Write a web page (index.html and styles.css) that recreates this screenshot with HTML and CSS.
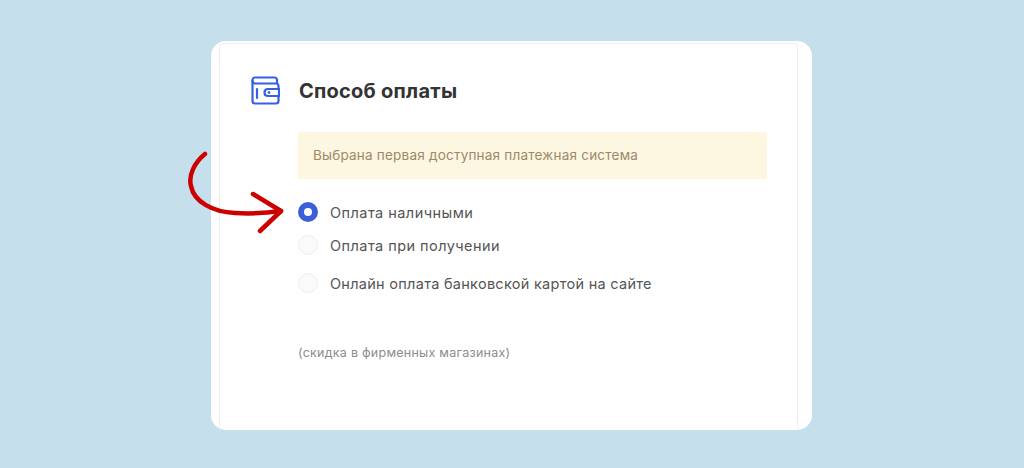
FILE: index.html
```html
<!DOCTYPE html>
<html>
<head lang="en">
    <meta charset="UTF-8">
    <title>Способ оплаты</title>
    <link rel="stylesheet" href="styles.css">
</head>
<body>
<div class="card">
    <svg class="arrow" width="110" height="100" viewBox="0 0 110 100" fill="none">
        <path d="M30 17C20 25 13 38 16 49C19 65 38 75 60 76C76 77 92 76 106 74" stroke="#cc0000" stroke-width="4.500" stroke-linecap="round"/>
        <path d="M78 57L106 74L85 94" stroke="#cc0000" stroke-width="4.500" stroke-linecap="round" stroke-linejoin="round"/>
    </svg>
    <div class="inner">
        <div class="head">
            <svg class="wallet" width="29" height="29" viewBox="0 0 29 29" fill="none" stroke="#3560e0" stroke-width="2.200">
                <path d="M26 8V4C26 2.500 25 1.500 23.500 1.500H4C2.500 1.500 1.500 2.500 1.500 4V25C1.500 26.500 2.500 27.500 4 27.500H25C26.500 27.500 27.500 26.500 27.500 25V20"/>
                <path d="M1.500 4.500C1.500 6.500 2.500 7.500 4 7.500H25C26.500 7.500 27.500 8.500 27.500 10V13"/>
                <path d="M6 13V22" stroke-linecap="round"/>
                <path d="M28 13H17C15 13 13.500 14.500 13.500 16.500C13.500 18.500 15 20 17 20H28V13Z"/>
                <circle cx="18" cy="16.500" r="1" fill="#3560e0" stroke-width="1"/>
            </svg>
            <h2 class="title">Способ оплаты</h2>
        </div>
        <div class="body">
            <div class="alert">Выбрана первая доступная платежная система</div>
            <div class="row row-first"><span class="radio radio-on"></span>Оплата наличными</div>
            <div class="row row-second"><span class="radio"></span>Оплата при получении</div>
            <div class="row row-last"><span class="radio"></span>Онлайн оплата банковской картой на сайте</div>
            <p class="note">(скидка в фирменных магазинах)</p>
        </div>
    </div>
</div>
</body>
</html>
```
FILE: styles.css
```css
* {
    margin: 0;
    padding: 0;
    box-sizing: border-box;
}
body {
    background-color: #c5dfed;
    height: 468px;
    overflow: hidden;
    padding-top: 41px;
    font-family: "Inter", "Noto Sans", sans-serif;
}
.card {
    position: relative;
    width: 601px;
    height: 389px;
    margin-left: 211px;
    padding: 2px 14px 0 8px;
    background-color: #fff;
    border-radius: 15px;
}
.arrow {
    position: absolute;
    left: -36px;
    top: 96px;
}
.inner {
    height: 387px;
    padding: 32px 30px 0 31px;
    border: 1px solid #efefef;
    border-bottom: 0;
    border-radius: 4px 4px 0 0;
}
.head {
    display: flex;
    align-items: center;
    gap: 19px;
    height: 29px;
}
.wallet {
    flex: none;
}
.title {
    font-size: 20px;
    font-weight: 700;
    letter-spacing: 0.250px;
    color: #333;
}
.body {
    margin-left: 47px;
    padding-top: 27px;
}
.alert {
    height: 47px;
    line-height: 46px;
    padding-left: 15px;
    background-color: #fdf6e1;
    color: #9a8a6a;
    font-size: 13.500px;
    letter-spacing: 0.220px;
}
.row {
    display: flex;
    align-items: center;
    gap: 12px;
    height: 20px;
    margin-top: 13px;
    color: #555;
    font-size: 14.500px;
    letter-spacing: 0.280px;
}
.row-first {
    margin-top: 23px;
    letter-spacing: 0.450px;
}
.row-second {
    letter-spacing: 0.450px;
}
.row-last {
    margin-top: 18px;
}
.radio {
    flex: none;
    width: 20px;
    height: 20px;
    border-radius: 50%;
    background-color: #fafafa;
    border: 1px solid #eee;
}
.radio-on {
    background-color: #fff;
    border: 6px solid #3b5fd9;
}
.note {
    margin-top: 52px;
    color: #8c8c8c;
    font-size: 12.500px;
    letter-spacing: 0.250px;
}
```
